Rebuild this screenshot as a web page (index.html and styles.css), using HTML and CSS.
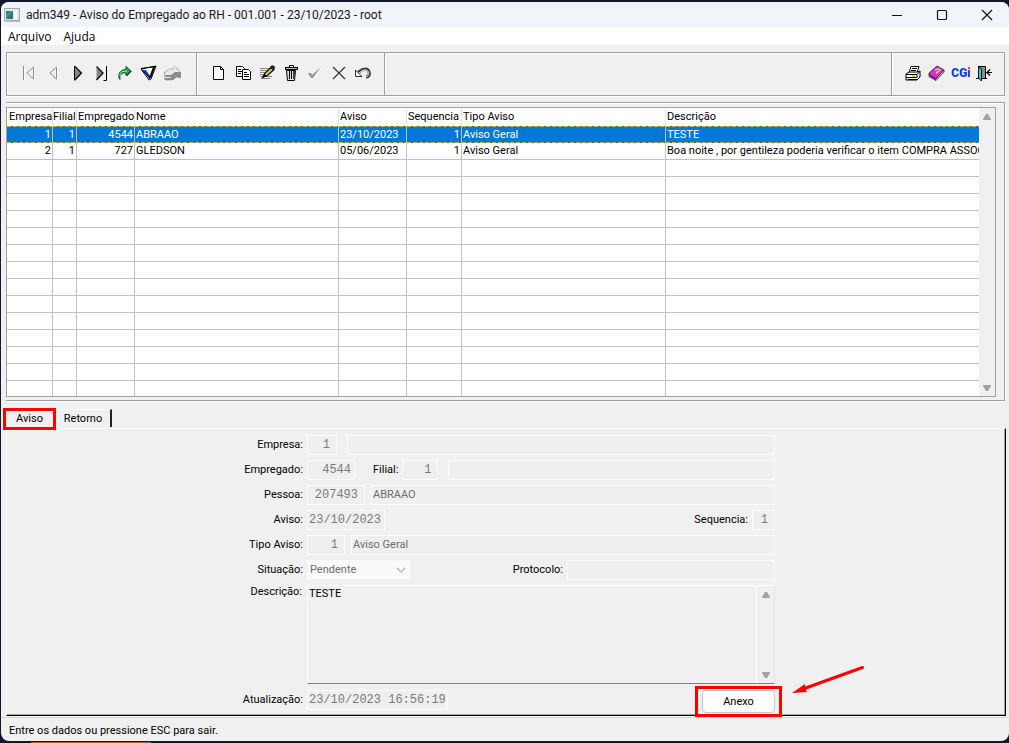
FILE: index.html
```html
<!DOCTYPE html>
<html lang="pt-BR">
<head>
<meta charset="utf-8">
<title>adm349 - Aviso do Empregado ao RH</title>
<link rel="stylesheet" href="styles.css">
</head>
<body>
<div class="window">
  <header class="titlebar">
    <svg class="app-icon" width="16" height="14" viewBox="0 0 16 14"><rect x=".5" y=".5" width="15" height="12" fill="#e4e6e8" stroke="#a9adb3"/><rect x="2" y="3" width="7" height="8" fill="#2c7a78"/><path d="M2 11V6l4-3h3z" fill="#3f9b80"/><rect x="10" y="3" width="3" height="8" fill="#fff"/><path d="M1 13.500h15" stroke="#b5b8bd"/></svg>
    <h1 class="title">adm349 - Aviso do Empregado ao RH - 001.001 - 23/10/2023 - root</h1>
    <div class="window-buttons">
      <button class="window-button" aria-label="Minimizar"><svg width="12" height="12" viewBox="0 0 12 12"><path d="M1 6.500h10" stroke="#111"/></svg></button>
      <button class="window-button" aria-label="Maximizar"><svg width="12" height="12" viewBox="0 0 12 12"><rect x="1.500" y="1.500" width="9" height="9" rx="1" fill="none" stroke="#111" stroke-width="1.200"/></svg></button>
      <button class="window-button" aria-label="Fechar"><svg width="12" height="12" viewBox="0 0 12 12"><path d="M1 1l10 10M11 1L1 11" stroke="#111" stroke-width="1.200"/></svg></button>
    </div>
  </header>
  <nav class="menubar">
    <button class="menu-item">Arquivo</button>
    <button class="menu-item">Ajuda</button>
  </nav>

  <div class="toolbar">
    <div class="tool-group">
      <button class="tool" aria-label="Primeiro"><svg width="20" height="18" viewBox="0 0 20 18"><path d="M5.500 2v14M15.500 2v14L8.500 9" fill="none" stroke="#fff"/><path d="M4.500 2v14M14.500 3v12L8 9z" fill="none" stroke="#8c8c8c"/></svg></button>
      <button class="tool" aria-label="Anterior"><svg width="20" height="18" viewBox="0 0 20 18"><path d="M14.500 2v14" stroke="#fff"/><path d="M13.500 3v12L7 9z" fill="none" stroke="#8c8c8c"/></svg></button>
      <button class="tool" aria-label="Próximo"><svg width="20" height="18" viewBox="0 0 20 18"><path d="M7.500 3v13l7-6.500z" fill="#858585"/><path d="M8 2.500l6.500 6.500-6.500 7" fill="none" stroke="#000" stroke-width="1.200"/><path d="M7.500 2v14.500" stroke="#000"/></svg></button>
      <button class="tool" aria-label="Último"><svg width="20" height="18" viewBox="0 0 20 18"><path d="M5.500 3v13l7-6.500z" fill="#858585"/><path d="M5.500 2.500l6.500 6.500-6.500 7" fill="none" stroke="#000" stroke-width="1.200"/><path d="M15.500 2v14.500h-3" fill="none" stroke="#000"/></svg></button>
      <button class="tool" aria-label="Atualizar"><svg width="20" height="18" viewBox="0 0 20 18"><path d="M5 15.500C2 11 5 5.500 11 5.500V2.500l5 4.500-5 4.500V9c-4-1-7 2-6 6.500z" fill="#20b04a" stroke="#064d20"/><path d="M5 12c0-4 2-5 7-5" fill="none" stroke="#b8f0c4"/><path d="M11.500 12l5-5" stroke="#000"/></svg></button>
      <button class="tool" aria-label="Filtrar"><svg width="20" height="18" viewBox="0 0 20 18"><path d="M2 5l15-3-5 13-2 1z" fill="#fff" stroke="#000"/><path d="M3 5.500L11 16V12L7 6z" fill="#1540e8"/><path d="M15 3l-4 11" stroke="#000" stroke-width="2"/><path d="M2 5l8.500 8M2 4.500l15-2" stroke="#000" fill="none"/></svg></button>
      <button class="tool" aria-label="Consultar"><svg width="20" height="18" viewBox="0 0 20 18"><path d="M1.500 8.500l6-4 2 1 2-3 6 5v4h-4l-4 4.500H2z" fill="#e9e9e9" stroke="#8b8b8b" stroke-dasharray="2 1"/><path d="M2 11h6l4-3h6v6h-3l-1-1-4 3H2v-2h5l2-1H3z" fill="#8b8b8b"/></svg></button>
    </div>
    <div class="tool-group">
      <button class="tool" aria-label="Novo"><svg width="20" height="18" viewBox="0 0 20 18"><path d="M4.500 2.500h7l3 3v10h-10z" fill="#fff" stroke="#000"/><path d="M11.500 2.500v3h3" fill="none" stroke="#000"/></svg></button>
      <button class="tool" aria-label="Copiar"><svg width="20" height="18" viewBox="0 0 20 18"><path d="M3.500 2.500h6l2 2v8h-8z" fill="#fff" stroke="#000"/><path d="M5 5.500h3M5 7.500h4M5 9.500h3" stroke="#000"/><path d="M9.500 5.500h6l2 2v8h-8z" fill="#fff" stroke="#000"/><path d="M11 8.500h3M11 10.500h5M11 12.500h5" stroke="#000"/></svg></button>
      <button class="tool" aria-label="Editar"><svg width="20" height="18" viewBox="0 0 20 18"><path d="M3 4.500h10M3 6.500h8M3 8.500h6M3 10.500h6M3 12.500h12M5 14.500h8" stroke="#888"/><path d="M7 12l1-3 6-5.500 3 2-7 6.500z" fill="#e0cb2c" stroke="#000" stroke-width="1.200"/><path d="M13.500 3.500l1-1.500h2l1 1-1 2.500z" fill="#6a176c" stroke="#000"/><path d="M4 15l3-5 3 2z" fill="#000"/></svg></button>
      <button class="tool" aria-label="Excluir"><svg width="20" height="18" viewBox="0 0 20 18"><path d="M5.500 6.500h9l-1 10h-7z" fill="#ddd" stroke="#000"/><rect x="4.500" y="3.500" width="12" height="2" fill="#bbb" stroke="#000"/><path d="M8.500 3V1.500h4V3M8.500 7v8M10.500 7v8" fill="none" stroke="#000"/><path d="M13 7v8" stroke="#444" stroke-width="2"/></svg></button>
      <button class="tool" aria-label="Confirmar"><svg width="20" height="18" viewBox="0 0 20 18"><path d="M6 14l2 1 8-11" fill="none" stroke="#fff"/><path d="M3 9h3l1 2 9-8-8 11H6z" fill="#949494"/></svg></button>
      <button class="tool" aria-label="Cancelar"><svg width="20" height="18" viewBox="0 0 20 18"><path d="M4 3l12 12M16 3L4 15" stroke="#333" stroke-width="1.200"/></svg></button>
      <button class="tool" aria-label="Desfazer"><svg width="20" height="18" viewBox="0 0 20 18"><path d="M5 9c4-5 10-5 11-1 1 2 0 5-3 5" fill="none" stroke="#333" stroke-width="3"/><path d="M6 9c4-4 8-4 9.500-1 1 2 0 4.500-3 5" fill="none" stroke="#fff"/><path d="M2.500 6v6.500H9z" fill="#fff" stroke="#333"/></svg></button>
    </div>
    <div class="tool-group tool-spacer"></div>
    <div class="tool-group">
      <button class="tool" aria-label="Imprimir"><svg width="20" height="18" viewBox="0 0 20 18"><path d="M6 9l2-6.500h8L14 9z" fill="#fff" stroke="#000"/><path d="M9 4.500h5M8 6.500h5" stroke="#000"/><path d="M3 10l3-2h9l2-1v6l-3 3H3z" fill="#fff" stroke="#000"/><path d="M3 10.500h11l3-3M3 13.500h11v-3M5 15.500h10" fill="none" stroke="#000"/><path d="M9 12h3" stroke="#e7d92c" stroke-width="2"/></svg></button>
      <button class="tool" aria-label="Manual"><svg width="20" height="18" viewBox="0 0 20 18"><path d="M2 9l8-7 7 4-8 9-7-4z" fill="#d72cd5" stroke="#222" stroke-width=".8"/><path d="M2 10.500v2l7 4 8-8.500V6l-8 9z" fill="#fff" stroke="#222" stroke-width=".8"/><path d="M2 9.500l7 5v2l-7-4z" fill="#8a168b"/><path d="M8 6l3-1 2 1-2 2-2 1" fill="none" stroke="#ffe138" stroke-width="1.500"/></svg></button>
      <button class="tool tool-cgi">CGi</button>
      <button class="tool" aria-label="Sair"><svg width="20" height="18" viewBox="0 0 20 18"><path d="M1 14.500h11M3.500 14V2.500h7V14" fill="#8a8a8a" stroke="#000"/><path d="M3.500 3l3 2v12l-3-3z" fill="#1fd2e4" stroke="#000"/><path d="M11 8.500h6M15 5.500l-3 3 3 3" fill="none" stroke="#000" stroke-width="1.200"/></svg></button>
    </div>
  </div>

  <main class="content">
    <section class="grid-frame">
      <div class="grid-box">
        <div class="grid-scroll">
          <table class="grid">
            <colgroup><col class="c-empresa"><col class="c-filial"><col class="c-empregado"><col class="c-nome"><col class="c-aviso"><col class="c-seq"><col class="c-tipo"><col></colgroup>
            <thead><tr><th>Empresa</th><th>Filial</th><th>Empregado</th><th>Nome</th><th>Aviso</th><th>Sequencia</th><th>Tipo Aviso</th><th>Descrição</th></tr></thead>
            <tbody>
              <tr class="selected"><td class="num">1</td><td class="num">1</td><td class="num">4544</td><td>ABRAAO</td><td>23/10/2023</td><td class="num">1</td><td>Aviso Geral</td><td>TESTE</td></tr>
              <tr><td class="num">2</td><td class="num">1</td><td class="num">727</td><td>GLEDSON</td><td>05/06/2023</td><td class="num">1</td><td>Aviso Geral</td><td>Boa noite , por gentileza poderia verificar o item COMPRA ASSOC</td></tr>
              <tr><td></td><td></td><td></td><td></td><td></td><td></td><td></td><td></td></tr>
              <tr><td></td><td></td><td></td><td></td><td></td><td></td><td></td><td></td></tr>
              <tr><td></td><td></td><td></td><td></td><td></td><td></td><td></td><td></td></tr>
              <tr><td></td><td></td><td></td><td></td><td></td><td></td><td></td><td></td></tr>
              <tr><td></td><td></td><td></td><td></td><td></td><td></td><td></td><td></td></tr>
              <tr><td></td><td></td><td></td><td></td><td></td><td></td><td></td><td></td></tr>
              <tr><td></td><td></td><td></td><td></td><td></td><td></td><td></td><td></td></tr>
              <tr><td></td><td></td><td></td><td></td><td></td><td></td><td></td><td></td></tr>
              <tr><td></td><td></td><td></td><td></td><td></td><td></td><td></td><td></td></tr>
              <tr><td></td><td></td><td></td><td></td><td></td><td></td><td></td><td></td></tr>
              <tr><td></td><td></td><td></td><td></td><td></td><td></td><td></td><td></td></tr>
              <tr><td></td><td></td><td></td><td></td><td></td><td></td><td></td><td></td></tr>
              <tr><td></td><td></td><td></td><td></td><td></td><td></td><td></td><td></td></tr>
              <tr><td></td><td></td><td></td><td></td><td></td><td></td><td></td><td></td></tr>
            </tbody>
          </table>
        </div>
        <div class="scrollbar"><svg width="10" height="8" viewBox="0 0 10 8"><path d="M1 7h8V6L6 1H4L1 6z" fill="#a3a3a3"/></svg><svg width="10" height="8" viewBox="0 0 10 8"><path d="M1 1h8v1L6 7H4L1 2z" fill="#a3a3a3"/></svg></div>
      </div>
    </section>

    <div class="tabs" role="tablist">
      <button class="tab tab-active" role="tab" aria-selected="true">Aviso</button>
      <button class="tab" role="tab" aria-selected="false">Retorno</button>
    </div>

    <section class="panel">
      <form class="form">
        <div class="row">
          <label class="label" for="empresa">Empresa:</label>
          <input class="field code w-30 pad-code" id="empresa" value="1" readonly>
          <input class="field grow gap-m" aria-label="Nome da empresa" readonly>
        </div>
        <div class="row">
          <label class="label" for="empregado">Empregado:</label>
          <input class="field code w-48" id="empregado" value="4544" readonly>
          <label class="inline-label gap-l" for="filial">Filial:</label>
          <input class="field code w-36 pad-code" id="filial" value="1" readonly>
          <input class="field grow gap-m" aria-label="Nome da filial" readonly>
        </div>
        <div class="row">
          <label class="label" for="pessoa">Pessoa:</label>
          <input class="field code w-58 pad-code" id="pessoa" value="207493" readonly>
          <input class="field grow gap-s" aria-label="Nome da pessoa" value="ABRAAO" readonly>
        </div>
        <div class="row">
          <label class="label" for="aviso">Aviso:</label>
          <input class="field mono w-78" id="aviso" value="23/10/2023" readonly>
          <label class="inline-label push" for="sequencia">Sequencia:</label>
          <input class="field code w-23 pad-code" id="sequencia" value="1" readonly>
        </div>
        <div class="row">
          <label class="label" for="tipo">Tipo Aviso:</label>
          <input class="field code w-38 pad-code" id="tipo" value="1" readonly>
          <input class="field grow gap-s" aria-label="Descrição do tipo" value="Aviso Geral" readonly>
        </div>
        <div class="row">
          <label class="label" for="situacao">Situação:</label>
          <div class="select-wrap">
            <select class="select" id="situacao" disabled><option>Pendente</option></select>
            <svg class="chevron" width="10" height="6" viewBox="0 0 10 6"><path d="M1 1l4 4 4-4" fill="none" stroke="#b5b5b5" stroke-width="1.300"/></svg>
          </div>
          <label class="inline-label push" for="protocolo">Protocolo:</label>
          <input class="field w-208" id="protocolo" readonly>
        </div>
        <div class="row row-top">
          <label class="label" for="descricao">Descrição:</label>
          <div class="memo">
            <textarea class="memo-text" id="descricao" readonly>TESTE</textarea>
            <div class="scrollbar memo-scroll"><svg width="10" height="8" viewBox="0 0 10 8"><path d="M1 7h8V6L6 1H4L1 6z" fill="#a3a3a3"/></svg><svg width="10" height="8" viewBox="0 0 10 8"><path d="M1 1h8v1L6 7H4L1 2z" fill="#a3a3a3"/></svg></div>
          </div>
        </div>
        <div class="row row-last">
          <label class="label" for="atualizacao">Atualização:</label>
          <input class="field mono w-141" id="atualizacao" value="23/10/2023 16:56:19" readonly>
          <div class="anexo-wrap push">
            <button class="anexo" type="button">Anexo</button>
            <svg class="arrow" width="74" height="32" viewBox="0 0 74 32"><path d="M71.500 3.500L12 25" stroke="#f00" stroke-width="3" stroke-linecap="round"/><path d="M1 29l13-9v4l2 4z" fill="#f00"/></svg>
          </div>
        </div>
      </form>
    </section>
  </main>
  <footer class="status">Entre os dados ou pressione ESC para sair.</footer>
</div>
</body>
</html>
```
FILE: styles.css
```css
* { box-sizing: border-box; }

body {
  margin: 0;
  min-height: 100vh;
  padding: 2px 0 2px 1px;
  display: flex;
  background: linear-gradient(90deg, transparent 31px, #a95e3c 31px 151px, transparent 151px) bottom / 100% 1px no-repeat, #12162a;
  font-family: Roboto, "Liberation Sans", sans-serif;
  font-size: 11px;
  line-height: 16px;
  color: #000;
}

button, input, select, textarea { font: inherit; color: inherit; margin: 0; padding: 0; }
button { border: 0; background: none; }

.window {
  flex: 1;
  min-width: 0;
  display: flex;
  flex-direction: column;
  background: #f0f0f0;
  border-radius: 8px;
  overflow: hidden;
}

.titlebar {
  height: 25px;
  display: flex;
  align-items: center;
  padding-left: 3px;
  background: #f1f4fa;
}
.title {
  margin: 0 auto 0 6px;
  font-size: 12px;
  font-weight: 400;
  color: #191919;
}
.window-buttons { display: flex; }
.window-button { width: 45px; height: 25px; display: grid; place-items: center; }

.menubar {
  height: 18px;
  display: flex;
  align-items: center;
  gap: 12px;
  padding: 2px 0 0 7px;
  background: #fff;
  font-family: "Open Sans", sans-serif;
  font-size: 12px;
}

.toolbar { display: flex; height: 44px; margin: 7px 4px 0 5px; }
.tool-group {
  display: flex;
  align-items: center;
  padding: 0 8px 2px;
  border: 1px solid #a0a0a0;
  border-left-width: 0;
  box-shadow: inset 1px 1px 0 #fff, 0 1px 0 #fff;
}
.tool-group:first-child { border-left-width: 1px; padding: 0 11px 2px 10px; }
.tool-group:nth-child(2) { padding: 0 9px 2px 10px; }
.tool-group:last-child { padding: 0 7px 2px 9px; }
.tool-spacer { flex: 1; }
.tool { width: 24px; height: 24px; display: grid; place-items: center; }
.tool-cgi {
  font-size: 12px;
  font-weight: 900;
  color: transparent;
  background: radial-gradient(circle at 20px 8px, #e61c24 2px, #0a3cf5 2px);
  -webkit-background-clip: text;
  background-clip: text;
}

.content { flex: 1; display: flex; flex-direction: column; margin: 6px 3px 0 5px; }
.grid-frame {
  padding: 4px 8px 3px 0;
  margin-right: 1px;
  border: 1px solid #a0a0a0;
  border-left: 0;
  box-shadow: inset 0 1px 0 #fff, 1px 1px 0 #fff;
}
.grid-box { display: flex; border: 1px solid #a0a0a0; background: #fff; }
.grid-scroll { flex: 1; min-width: 0; overflow: hidden; }
.grid { width: 100%; border-collapse: separate; border-spacing: 0; table-layout: fixed; }
.grid th, .grid td {
  height: 17px;
  padding: 0 1px;
  overflow: hidden;
  white-space: nowrap;
  text-align: left;
  font-weight: 400;
  line-height: 16px;
  border-right: 1px solid #c0c0c0;
  border-bottom: 1px solid #c0c0c0;
}
.grid th { height: 18px; border-right-color: #e5e5e5; border-bottom: 0; padding: 0 0 0 1px; }
.grid th:first-child { padding-left: 2px; }
.grid th:nth-child(2) { padding-left: 0; }
.grid td:last-child, .grid th:last-child { border-right: 0; padding-right: 0; }
.grid tr:last-child td { border-bottom: 0; }
.grid tbody tr:last-child td { height: 15px; }
.grid .num { text-align: right; }
.grid .selected td {
  color: #fff;
  background:
    repeating-linear-gradient(90deg, #d5b030 0 4px, #0078d7 4px 6px) top / 100% 1px no-repeat,
    repeating-linear-gradient(90deg, #d5b030 0 4px, #0078d7 4px 6px) bottom / 100% 1px no-repeat,
    #0078d7;
  border-bottom: 0;
}
.c-empresa { width: 46px; }
.c-filial { width: 24px; }
.c-empregado { width: 58px; }
.c-nome { width: 204px; }
.c-aviso { width: 68px; }
.c-seq { width: 55px; }
.c-tipo { width: 204px; }

.scrollbar {
  width: 16px;
  display: flex;
  flex-direction: column;
  justify-content: space-between;
  align-items: center;
  padding: 5px 0 4px;
  background: #f0f0f0;
}

.tabs { display: flex; align-items: flex-end; height: 27px; padding-bottom: 1px; }
.tab {
  width: 56px;
  height: 18px;
  border-top: 1px solid #fff;
  border-right: 2px solid #222;
}
.tab-active {
  width: 53px;
  height: 22px;
  margin: 0 0 -3px -3px;
  border: 3px solid #f00;
  z-index: 1;
  background: #f0f0f0;
}

.panel {
  flex: 1;
  border-top: 1px solid #fff;
  border-left: 1px solid #fff;
  border-right: 1px solid #000;
  border-bottom: 1px solid #000;
  box-shadow: inset -1px -1px 0 #a0a0a0;
  padding-top: 6px;
}
.form {
  width: 542px;
  max-width: 100%;
  margin: 0 auto;
  padding-right: 2px;
  display: flex;
  flex-direction: column;
  gap: 6px;
}
.row { display: flex; align-items: center; height: 19px; }
.label { width: 68px; margin-right: 4px; text-align: right; }
.inline-label { margin-right: 4px; }
.gap-s { margin-left: 6px; }
.gap-m { margin-left: 10px; }
.gap-l { margin-left: 18px; }
.push { margin-left: auto; }

.field {
  height: 20px;
  min-width: 0;
  padding: 0 1px;
  border: 1px solid #fcfcfc;
  background: #efefef;
  color: #6d6d6d;
}
.grow { flex: 1; }
.code, .mono { font-family: "Liberation Mono", monospace; font-size: 12px; padding: 0 1px; color: #7a7a7a; }
.code { text-align: right; padding-right: 3px; }
.pad-code { padding-right: 6px; }
.w-23 { width: 23px; }
.w-30 { width: 30px; }
.w-36 { width: 36px; }
.w-38 { width: 38px; }
.w-48 { width: 48px; }
.w-58 { width: 58px; }
.w-78 { width: 78px; }
.w-141 { width: 141px; }
.w-208 { width: 208px; }

.select-wrap { position: relative; width: 103px; }
.select {
  display: block;
  width: 100%;
  height: 19px;
  padding: 0 3px;
  appearance: none;
  border: 0;
  background: #fafafa;
  color: #6d6d6d;
  opacity: 1;
}
.chevron { position: absolute; right: 4px; top: 7px; }

.row-top { height: 99px; align-items: flex-start; }
.row-top .label { padding-right: 1px; line-height: 13px; }
.memo {
  flex: 1;
  display: flex;
  height: 99px;
  border: 1px solid #fff;
  border-bottom-color: #808080;
  border-right-color: #e2e2e2;
}
.memo-text { flex: 1; border: 0; padding: 0 1px; resize: none; background: #f0f0f0; outline: 0; }
.memo-scroll { width: 18px; border-left: 1px solid #fff; }

.row-last { height: 20px; }
.anexo-wrap {
  position: relative;
  display: flex;
  margin-right: -7px;
  margin-top: 3px;
  padding: 1px 4px;
  border: 3px solid #f00;
}
.anexo {
  width: 73px;
  height: 23px;
  border: 1px solid #c8c8c8;
  border-radius: 4px;
  background: #fdfdfd;
}
.arrow { position: absolute; left: 93px; top: -25px; }

.status {
  height: 24px;
  margin-top: 1px;
  padding: 5px 8px 0;
  border-top: 1px solid #d7d7d7;
}
```
